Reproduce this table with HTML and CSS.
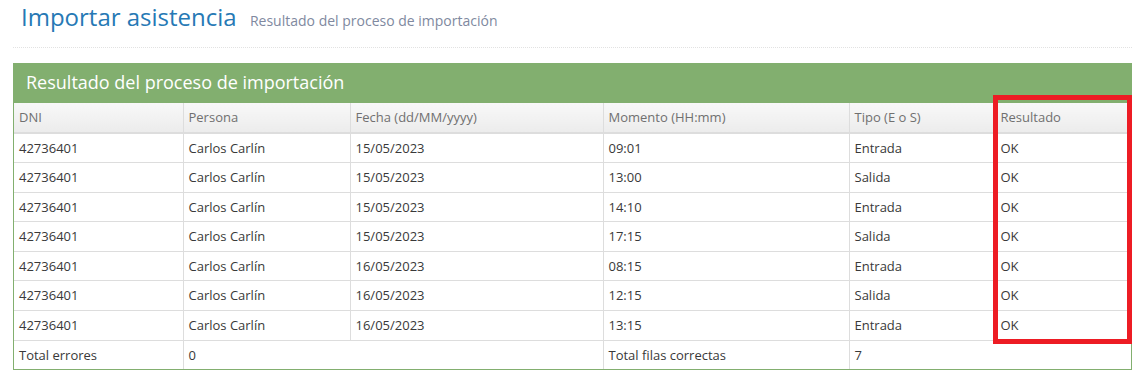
FILE: index.html
```html
<!DOCTYPE html>
<html lang="es">
<head>
<meta charset="utf-8">
<title>Importar asistencia</title>
<link rel="stylesheet" href="styles.css">
</head>
<body>
<div class="page">
  <div class="page-header">
    <h1>Importar asistencia <small>Resultado del proceso de importación</small></h1>
  </div>
  <div class="widget">
    <div class="widget-header"><h4>Resultado del proceso de importación</h4></div>
    <table class="grid">
      <colgroup>
        <col class="c1"><col class="c2"><col class="c3"><col class="c4"><col class="c5"><col class="c6">
      </colgroup>
      <thead>
        <tr><th>DNI</th><th>Persona</th><th>Fecha (dd/MM/yyyy)</th><th>Momento (HH:mm)</th><th>Tipo (E o S)</th><th>Resultado</th></tr>
      </thead>
      <tbody>
        <tr><td>42736401</td><td>Carlos Carlín</td><td>15/05/2023</td><td>09:01</td><td>Entrada</td><td>OK</td></tr>
        <tr><td>42736401</td><td>Carlos Carlín</td><td>15/05/2023</td><td>13:00</td><td>Salida</td><td>OK</td></tr>
        <tr><td>42736401</td><td>Carlos Carlín</td><td>15/05/2023</td><td>14:10</td><td>Entrada</td><td>OK</td></tr>
        <tr><td>42736401</td><td>Carlos Carlín</td><td>15/05/2023</td><td>17:15</td><td>Salida</td><td>OK</td></tr>
        <tr><td>42736401</td><td>Carlos Carlín</td><td>16/05/2023</td><td>08:15</td><td>Entrada</td><td>OK</td></tr>
        <tr><td>42736401</td><td>Carlos Carlín</td><td>16/05/2023</td><td>12:15</td><td>Salida</td><td>OK</td></tr>
        <tr><td>42736401</td><td>Carlos Carlín</td><td>16/05/2023</td><td>13:15</td><td>Entrada</td><td>OK</td></tr>
        <tr class="total"><td>Total errores</td><td colspan="2">0</td><td>Total filas correctas</td><td colspan="2">7</td></tr>
      </tbody>
    </table>
    <div class="highlight"></div>
  </div>
</div>
</body>
</html>
```
FILE: styles.css
```css
* { box-sizing: border-box; }
html, body { margin: 0; padding: 0; background: #fff; }
body {
  font-family: "Open Sans", "Liberation Sans", sans-serif;
  font-size: 13px;
  color: #393939;
}
.page { padding: 0 12px 0 13px; }
.page-header {
  padding-top: 1px;
  padding-bottom: 10px;
  border-bottom: 1px dotted #e2e2e2;
  margin-bottom: 15px;
}
.page-header h1 {
  margin: 0;
  padding-left: 8px;
  font-size: 24px;
  line-height: 32px;
  font-weight: 400;
  color: #2679b5;
}
.page-header h1 small {
  margin: 0 6px 0 7px;
  font-size: 14px;
  font-weight: 400;
  color: #8089a0;
}
.widget {
  position: relative;
  border: 1px solid #82af6f;
}
.widget-header {
  height: 39px;
  background: #82af6f;
  padding-left: 12px;
}
.widget-header h4 {
  margin: 0;
  font-size: 18px;
  line-height: 36px;
  font-weight: 400;
  color: #fff;
}
.grid {
  width: 100%;
  table-layout: fixed;
  border-collapse: collapse;
}
.c1 { width: 169px; }
.c2 { width: 167px; }
.c3 { width: 253px; }
.c4 { width: 246px; }
.c5 { width: 146px; }
.c6 { width: auto; }
.grid th, .grid td {
  padding: 5px 5px;
  line-height: 18.57px;
  text-align: left;
  border: 1px solid #ddd;
  white-space: nowrap;
  overflow: hidden;
}
.grid th:first-child, .grid td:first-child { border-left: 0; }
.grid th:last-child, .grid td:last-child { border-right: 0; }
.grid thead th {
  border-top: 0;
  font-weight: 400;
  color: #707070;
  background: linear-gradient(#f8f8f8, #ececec);
  border-bottom: 2px solid #ddd;
  padding-top: 5px;
  padding-bottom: 5px;
}
.grid .total td { border-bottom: 0; }
.highlight {
  position: absolute;
  left: 979px;
  top: 31px;
  width: 139px;
  height: 249px;
  border: 5px solid #ed1c24;
  pointer-events: none;
}
```
